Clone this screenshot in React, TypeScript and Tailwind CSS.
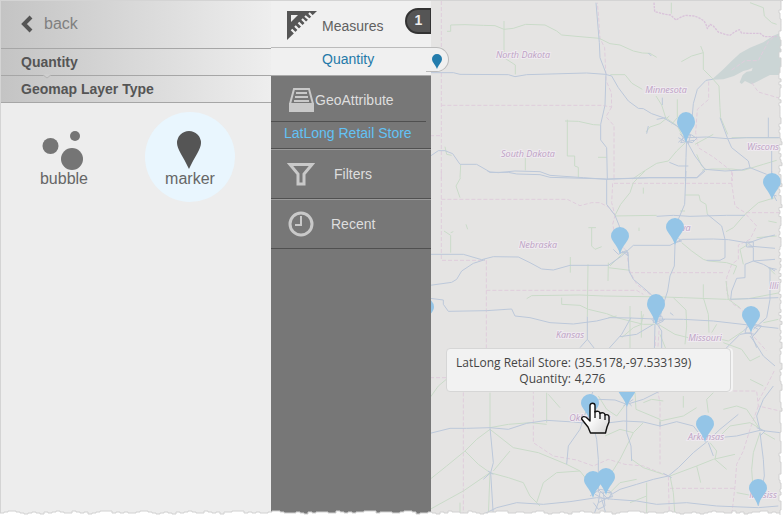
import React from "react";

const ARIAL = "font-['Liberation_Sans',Arial,sans-serif]";

const STATES = [
  { name: "North Dakota", x: 523, y: 57 },
  { name: "Minnesota", x: 666, y: 92 },
  { name: "South Dakota", x: 528, y: 156 },
  { name: "Wiscons", x: 763, y: 149 },
  { name: "Nebraska", x: 538, y: 247 },
  { name: "Iowa", x: 681, y: 230 },
  { name: "Kansas", x: 570, y: 337 },
  { name: "Missouri", x: 705, y: 340 },
  { name: "Illi", x: 774, y: 288 },
  { name: "Oklahoma", x: 590, y: 420 },
  { name: "Arkansas", x: 706, y: 439 },
  { name: "Mississ", x: 763, y: 497 },
];

const PINS = [
  { x: 686, y: 111, big: true },
  { x: 772, y: 172 },
  { x: 620, y: 226 },
  { x: 675, y: 217 },
  { x: 656, y: 293, big: true },
  { x: 751, y: 305 },
  { x: 425, y: 297 },
  { x: 590, y: 393 },
  { x: 627, y: 379 },
  { x: 705, y: 414 },
  { x: 593, y: 470 },
  { x: 606, y: 467 },
  { x: 758, y: 478 },
];

/* Irregular step pattern for the torn paper edge. */
const TEAR = [3, 2, 1, 1, 2, 3, 4, 3, 3, 2, 3, 4, 2, 3, 2, 1, 2, 2, 3, 3, 1, 2, 3, 2, 4, 3, 2, 2, 1, 1, 1, 3, 2, 3, 2, 2, 3];
const bottomEdge = Array.from({ length: 200 }, (_, i) => `H${i * 4} V${TEAR[(i + (i >> 3)) % TEAR.length]}`).join(" ");
const rightEdge = Array.from({ length: 175 }, (_, i) => `V${i * 3} H${TEAR[(i * 5 + (i >> 2)) % TEAR.length]}`).join(" ");

function North() {
  return (
    <g transform="translate(430 0) scale(.33333)">
      <path fill="#cbd5d5" d="M845 236L880 205L905 180L930 157L960 140L1000 124L1030 104L1060 92V222L1020 222L985 240L965 250L945 240L935 249L929 244L938 222L950 212L965 210L968 200L955 206L940 210L912 225L880 235Z" />
      <g className="stroke-[#dfcddc]" strokeDasharray="12 6">
        <path d="M34 0V540M34 313H515L545 318L544 275L528 238L524 140L510 112L506 50L502 5M545 318L528 347L552 374V540M0 404H34M836 242V295L802 325L797 395L805 440L850 468L885 495L908 514L907 540M905 207L945 179H985L1000 150L1015 122L1035 104M965 245L985 273L1050 292" />
      </g>
      <path className="stroke-[#d9c3da]" strokeDasharray="7 3" strokeWidth="4" d="M672 5L674 32L706 40L722 42L738 57L750 50L765 43L794 45L810 52L822 60L828 70L832 83L840 70L850 75L865 93L885 100L900 103L915 92L928 86L935 96L955 97H990L1003 107H1040" />
      <g className="stroke-[#cadbc9]">
        <path d="M51 91H62V72L105 71L160 73L195 74L222 85L250 82L287 70L345 72L380 90L395 102L450 107L508 112L540 128L570 132L610 150L637 156L660 157L680 169M222 60V170L256 192V220M736 174M754 182L785 165L820 155V205L845 230L867 255L870 320L872 350L893 400M820 155L812 135M405 360L445 361L490 371L510 372M412 356V465H434V495L445 499V530M286 470V508M504 469H530M541 221H585L606 247L637 265M678 285L695 312L707 350L742 375L760 410M742 295V350L725 370M648 393L660 378L690 368L718 345M608 534L635 515L680 487L715 480L740 450L766 425M905 410H1045M816 507L847 504H905L940 508L1000 490L1040 478M45 437L50 460L65 463M92 492L90 530M960 5L1000 20L1003 45L1025 65L1040 70M724 5V38M800 460L815 495L830 507M795 430L850 400" />
      </g>
      <g className="stroke-[#bcc8da]">
        <path d="M498 5L505 90L508 125L510 170L528 217L525 313L512 370V417L530 440L532 535M0 215H70L90 220L235 221L255 227L290 221L470 216L526 220L545 225L565 260L595 300L625 322L640 323L665 338L700 350L745 378L770 410L768 470L766 540M785 365L790 308L802 265L828 238L848 235M655 156L664 165M770 410L830 408L893 413L950 410H1060M0 466L25 449H45L68 458L90 490H140L180 513L205 515L255 510L330 512L360 523L460 530L530 535L660 530H800L825 505L885 510L935 507L960 500L1010 520L1040 540M893 413L905 440L955 480L960 500M770 420L795 465L825 505M718 484L745 495H775M893 413L870 350M1015 350V410M1025 430V540M697 290V312M680 355L708 350M655 375L650 398" />
        <path d="M745 424L760 410L785 402L800 412L787 425L765 421L745 410M750 398L775 428L782 400L764 402L752 425L792 418" />
      </g>
    </g>
  );
}

function Middle() {
  return (
    <g transform="translate(430 170) scale(.33333)">
      <g className="stroke-[#dfcddc]" strokeDasharray="12 6">
        <path d="M34 0V268H165M34 85H412L450 104L485 95H510L535 108L555 133L548 160L560 210L590 240L597 295L620 340L660 370L680 400L690 435L683 540M169 268V540M169 358H620L640 370M552 37H905V0M548 37L545 95L555 133M597 305H880M905 37L915 105L945 125H1050M948 130L980 165L960 205L925 222L925 265L905 280L890 320V365L910 400L935 415L960 455L965 490L1010 540" />
      </g>
      <g className="stroke-[#cadbc9]">
        <path d="M92 20L78 45L90 80M42 180L62 193V245M62 185L70 182M475 170H498M485 170V225L495 235L515 227M421 258V305M474 280L472 437M535 275L534 330M535 290L600 298M555 133L572 100L600 65L610 35L645 0M640 50V68M627 170V180M555 135L680 133M765 72H807L811 90L828 100L832 130M838 0M290 383L305 374L450 372L520 375L700 378L760 380L890 385L955 383L1050 365M395 380V400L450 403L475 415L530 428L560 440L600 450L640 460L675 460M600 405V540M634 420V500M730 380L768 417L770 465L765 520M685 460L735 490L775 500M820 340V380L835 430L837 485M860 460L845 485M755 215L785 240L820 265L835 270L890 275L920 285L910 310M540 285L575 250L590 240M888 182L910 170L945 130L985 95L1035 80M1015 150L1040 155M930 410L895 385L888 330M940 280L930 235L955 220M980 200L1040 195M1015 290L1035 310M560 435L535 440M575 500L610 470L634 460L640 430M690 490L710 540M850 500L895 510L940 480M1000 455L1045 445M765 120H750M108 160L113 175" />
      </g>
      <g className="stroke-[#bcc8da]">
        <path d="M172 0L180 4H235L260 9L330 11L360 19L530 24L660 20H802L825 0M530 24V100L555 133L568 165L570 245L594 243L597 300L610 325L640 350L665 372L690 400L680 460M768 0L764 100L745 145L735 220L733 285L720 315L713 360L700 400L690 440M680 136L730 133L780 136L890 133L945 133M832 130L875 165L885 205V260L870 268H830M610 223H720L755 205L850 204L895 206L955 216L1000 200L1035 192M610 223L575 255L535 283H420L370 297L335 294L300 275L265 258L190 257L155 266L100 250H0M165 266L130 277L95 300L80 325L65 334L0 343M0 382L40 387V400L55 421L170 419L245 414L255 435L300 440L360 455L430 459L500 450L540 440L600 441L675 444L760 445L850 450L955 462L1045 472M472 437V505L450 530M472 505L493 532M603 440L575 490L530 540M570 497L620 490L670 460M675 460L673 540M682 460L695 480V540M955 216L970 230V270L1035 265M955 225L1035 232M970 270L945 280V320L920 322L905 360L902 385L955 383L1045 380M1020 290V385L1010 440L970 475M1025 0V70L1040 75M1035 300L1000 280L970 270M962 485L930 490L885 535M962 485L980 530" />
        <path d="M550 235L565 250L590 238L595 255L575 240M735 215L755 210L745 202M665 445L680 460L700 450L695 435L670 440V455L705 445M940 480L960 462L985 475L975 490L945 485L955 455L995 465L965 500M948 213H970V228H950ZM720 425L730 433M1015 290L1040 295M1030 70L1040 90" />
      </g>
    </g>
  );
}

function South() {
  return (
    <g transform="translate(430 335) scale(.33333)">
      <g className="stroke-[#dfcddc]" strokeDasharray="12 6">
        <path d="M0 125H100V540M310 125V320L370 360L440 372L490 390L535 370L585 385L640 390L690 410L715 420L718 540M676 0V130L690 200V385M676 165H980L985 210L1050 225M985 210L960 280L940 345L920 385L915 450L905 540M720 457H915M985 195L1010 150L1035 100" />
      </g>
      <g className="stroke-[#cadbc9]">
        <path d="M0 185L25 150L55 125M180 170V275M180 275L235 265L300 260L350 265M350 170V260M355 175L390 215M180 280L140 310L105 345L50 390L0 430M105 345L145 385L180 410L235 425L280 440L300 480L330 510M180 280L250 335L325 350L410 385L450 405L485 450M180 410L175 540M180 410L100 465L0 520M505 180L530 220L560 240L590 200M615 170L618 220L690 250V270M690 255L760 240L800 215M640 200L665 190L700 195M545 410L570 370L590 330L610 290L640 260M605 370L640 395L700 415M450 405L380 410L340 440L320 500M535 475L570 440L620 430M720 420L730 470L735 540M720 420L800 390L850 370L915 355M800 390L812 440M840 320L860 345L855 370L890 400M870 300L900 270L960 260L995 280M990 280L950 220L920 210L880 220M990 290L970 350L965 400L970 470M1000 290L1035 310M920 470L1000 485L1040 480M760 180V215M850 170L830 190L835 230M525 300L570 280L610 290M880 20L935 40L960 75L990 60M1000 150L960 130M650 440L650 540M600 500L650 480M90 500V540M240 345L190 405" />
      </g>
      <g className="stroke-[#bcc8da]">
        <path d="M0 292L60 277H110L180 275L235 280L290 262L350 253L430 258L500 265L580 255L640 258L690 270L740 257L790 270L825 315L865 305L920 300L990 283M0 190V150M180 275L190 380L182 410L190 540M182 410L160 430M495 150L480 190L450 280L415 330L410 385M490 270L500 310L505 370V470M505 190L555 192L590 205L640 190L700 160M590 205V290L603 330L605 375M545 475L570 460L620 445L670 430L715 420L745 395L790 350L830 318L870 280L925 235M835 320L850 360M990 283L980 240L1000 190L1030 150M990 283L1050 290M990 290L1000 370L1003 420L985 510M150 540L200 515L260 500L340 505L420 497L500 485L550 490L620 495L680 505L770 500L860 510L985 515L1045 510M960 0L975 20L1000 60L1035 90M505 500L490 540M515 490L530 540" />
        <path d="M480 480L510 460L540 465L548 482L520 488L495 475M500 455L535 490L545 470L510 468L505 500L545 480M490 500L505 520L525 510L520 470M585 190L605 210M580 210L610 190M980 275L1005 285L990 300M174 405L190 415M700 412L725 425M690 258V272" />
      </g>
    </g>
  );
}

function GeoMap() {
  return (
    <svg className="absolute inset-0 h-full w-full" viewBox="431 0 352 515" preserveAspectRatio="xMinYMin slice" role="img" aria-label="Retail store map">
      <g fill="none" strokeWidth="3" strokeLinejoin="round">
        <North />
        <Middle />
        <South />
      </g>
      <g className="fill-[#bda2c4] stroke-[#efeaf0] font-['Open_Sans','Noto_Sans',sans-serif] text-[9px] italic" strokeWidth="2" paintOrder="stroke" textAnchor="middle">
        {STATES.map((s) => (
          <text key={s.name} x={s.x} y={s.y}>{s.name}</text>
        ))}
      </g>
      {PINS.map((p) => (
        <path
          key={`${p.x}-${p.y}`}
          fill="#94c5e7"
          d={p.big
            ? `M${p.x - 9} ${p.y + 10}a9 10 0 0 1 18 0c0 6-6 9-9 21c-3-12-9-15-9-21z`
            : `M${p.x - 9} ${p.y + 9}a9 9 0 0 1 18 0c0 5-6 8-9 18c-3-10-9-13-9-18z`}
        />
      ))}
    </svg>
  );
}

function HandCursor() {
  return (
    <svg className="absolute top-[401px] left-[150px]" width="30" height="35" viewBox="0 0 30 35" aria-hidden="true">
      <defs>
        <linearGradient id="hand" x1="0" y1="0" x2="1" y2="1">
          <stop offset=".4" stopColor="#fff" />
          <stop offset="1" stopColor="#d4d4d4" />
        </linearGradient>
      </defs>
      <path fill="url(#hand)" stroke="#111" strokeWidth="1.4" strokeLinejoin="round" d="M9 18V3.500C9 .5 14 .5 14 3.500V10C16 8.500 19 9.500 19 11.500C21 10 24 11 24 13C26 12 28 13 28 15V20L26 25L24.500 31H9.500L7 25L3 20L.7 17C.5 14 4 14 6 16L9 19Z" />
      <path fill="none" stroke="#111" strokeWidth="1.3" d="M14 9V16M19 11V17M24 13V18" />
    </svg>
  );
}

function SidePanel() {
  const bar = "border-b border-[#a6a6a6] bg-linear-to-r from-[#c4c4c4] to-[#eeeeee] pl-5";
  return (
    <aside className="flex w-[271px] shrink-0 flex-col border-l border-[#d4d4d4] bg-[#ededed] text-[#555]">
      <div className={`flex h-12 items-center pb-0.5 ${bar}`}>
        <button type="button" className="flex items-center gap-[11px] text-base text-[#808080]">
          <svg width="12" height="18" viewBox="0 0 12 18" aria-hidden="true">
            <path d="M10 2L3 9L10 16" fill="none" stroke="#555" strokeWidth="4" />
          </svg>
          back
        </button>
      </div>
      <h2 className={`relative h-[27px] text-sm leading-[26px] font-bold ${bar}`}>
        Quantity
        <svg className="absolute -bottom-1 left-[41px]" width="10" height="5" viewBox="0 0 10 5" aria-hidden="true">
          <path d="M0 0H10L5 4Z" fill="#cecece" />
          <path d="M1 1L5 4L9 1" fill="none" stroke="#b5b5b5" />
        </svg>
      </h2>
      <h3 className={`h-[27px] text-sm leading-[26px] font-bold ${bar}`}>Geomap Layer Type</h3>
      <div className="grid grid-cols-2 gap-9 pt-[9px] pr-9 pl-[18px]">
        <button type="button" className="flex size-[90px] flex-col items-center rounded-full pt-4 text-base text-[#666]">
          <svg className="overflow-visible" width="42" height="42" viewBox="0 0 42 42" fill="#757575" aria-hidden="true">
            <circle cx="7.500" cy="18" r="8" />
            <circle cx="32" cy="8" r="5" />
            <circle cx="29" cy="31" r="11" />
          </svg>
          <span className="leading-[18px]">bubble</span>
        </button>
        <button type="button" aria-pressed="true" className="flex size-[90px] flex-col items-center rounded-full bg-[#e9f6fe] pt-4 text-base text-[#666]">
          <svg width="42" height="42" viewBox="0 0 42 42" fill="#555" aria-hidden="true">
            <path d="M8 15a12 12 0 0 1 24 0c0 6-6 13-12 26c-6-13-12-20-12-26z" />
          </svg>
          <span className="leading-[18px]">marker</span>
        </button>
      </div>
    </aside>
  );
}

function DataPanel() {
  return (
    <nav className="relative z-10 flex w-40 shrink-0 flex-col bg-[#777] text-sm text-[#dedede]" aria-label="Layer data">
      <button type="button" className="relative flex h-[47px] items-center gap-1 border-b border-[#bbb] bg-[#f0f0f0] pt-1 pl-4 text-[#606060]">
        <svg width="31" height="30" viewBox="0 0 31 30" aria-hidden="true">
          <path d="M0 0H30L0 29Z" fill="#555" />
          <path d="M4 4H11L4 11Z" fill="#f0f0f0" />
          <path d="M26 6L21 1M23 9L17 4M19 12L14 7M15.500 15.500L10.500 10.500M12 19L7 14M8.500 22.500L3.500 17.500" transform="translate(1 1)" stroke="#f0f0f0" strokeWidth="2.2" fill="none" />
        </svg>
        Measures
        <span className="absolute top-[7px] right-0 flex h-[26px] w-[26px] items-center justify-center rounded-l-full border-2 border-r border-[#333] bg-[#555] pb-0.5 font-bold text-[#eee]">1</span>
      </button>
      <button type="button" className="relative flex h-7 items-start border-b border-[#aaa] bg-[#f0f0f0] pt-px pl-[51px] text-[#2479a8]">
        Quantity
        <span className="absolute -top-px -right-[18px] flex h-[25px] w-[23px] items-center justify-center rounded-r-full border border-l-0 border-[#bbb] bg-[#f0f0f0] pt-1">
          <svg width="10" height="16" viewBox="0 0 10 16" fill="#237cac" aria-hidden="true">
            <path d="M0 5a5 5 0 0 1 10 0c0 3-3 5-5 10c-2-5-5-7-5-10z" />
          </svg>
        </span>
      </button>
      <button type="button" className="mr-[5px] flex h-[46px] items-center border-b border-[#505050] pt-0.5 pl-[17px]">
        <svg className="shrink-0" width="27" height="26" viewBox="0 0 27 26" aria-hidden="true">
          <path d="M2 17L6 2H21L25 17" fill="none" stroke="#c9c9c9" strokeWidth="2" />
          <path d="M8 6H19M7 10H20M6 14H21" stroke="#c9c9c9" strokeWidth="2" />
          <path d="M1 16H26V25H1Z" fill="#c9c9c9" />
        </svg>
        GeoAttribute
      </button>
      <button type="button" className="h-[27px] border-b border-[#505050] pb-1 pl-[13px] text-left text-[#63c2f5]">LatLong Retail Store</button>
      <button type="button" className="flex h-[50px] items-center gap-[19px] border-t border-b border-t-[#999] border-b-[#505050] pl-4">
        <svg width="28" height="24" viewBox="0 0 28 24" aria-hidden="true">
          <path d="M3 2.500H25L17 12V22H11V12Z" fill="none" stroke="#c9c9c9" strokeWidth="3" />
        </svg>
        Filters
      </button>
      <button type="button" className="flex h-[50px] items-center gap-4 border-t border-b border-t-[#999] border-b-[#505050] pl-4">
        <svg width="28" height="26" viewBox="0 0 28 26" fill="none" stroke="#c9c9c9" aria-hidden="true">
          <circle cx="14" cy="13" r="11" strokeWidth="3" />
          <path d="M14 5V14H8" strokeWidth="2" />
        </svg>
        Recent
      </button>
    </nav>
  );
}

export default function App() {
  return (
    <div className={`relative flex h-screen min-h-[400px] overflow-hidden border-t border-[#d4d4d4] bg-white ${ARIAL}`}>
      <SidePanel />
      <DataPanel />
      <main className="relative -mt-px min-w-0 flex-1 border-t border-[#d4d4d4] bg-[#e5e4e3]">
        <GeoMap />
        <div role="tooltip" className="absolute top-[347px] left-[15px] w-[285px] rounded border border-[#d6d6d6] bg-[#f2f2f2] px-2 pt-1.5 pb-1 font-['Open_Sans',sans-serif] text-xs text-[#444] shadow-[2px_0_0_#f4f4f4]">
          <table>
            <tbody>
              <tr>
                <th scope="row" className="pr-1 pl-px text-right font-normal">LatLong Retail Store:</th>
                <td>(35.5178,-97.533139)</td>
              </tr>
              <tr>
                <th scope="row" className="pr-1 pl-px text-right font-normal">Quantity:</th>
                <td>4,276</td>
              </tr>
            </tbody>
          </table>
        </div>
        <HandCursor />
      </main>
      <svg className="pointer-events-none absolute bottom-0 left-0 z-20 h-[5px] w-full" viewBox="0 0 783 5" preserveAspectRatio="none" aria-hidden="true">
        <path d={`M-4 8V3${bottomEdge} V8Z`} fill="#fff" stroke="#d2d2d2" />
      </svg>
      <svg className="pointer-events-none absolute top-0 right-0 z-20 h-full w-[5px]" viewBox="0 0 5 515" preserveAspectRatio="none" aria-hidden="true">
        <path d={`M8 -4H2${rightEdge} H8Z`} fill="#fff" stroke="#d2d2d2" />
      </svg>
    </div>
  );
}
